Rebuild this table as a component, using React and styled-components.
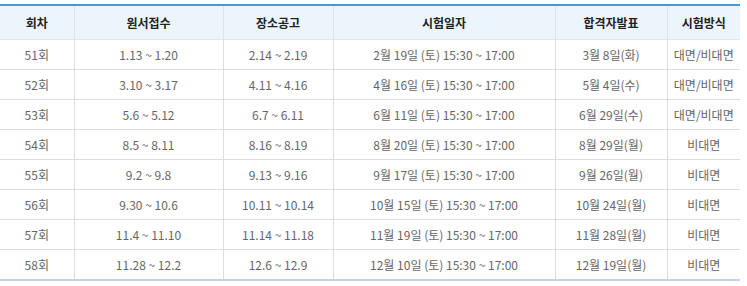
import React from "react";
import styled, { createGlobalStyle } from "styled-components";

const GlobalStyle = createGlobalStyle`
  body {
    margin: 0;
    background: #ffffff;
    font-family: "Noto Sans CJK KR", "Noto Sans", sans-serif;
  }
`;

const Wrapper = styled.div`
  padding-top: 4px;
  width: 740px;
`;

const Table = styled.table`
  width: 740px;
  border-collapse: collapse;
  table-layout: fixed;
  border-top: 2px solid #3d9be1;
  border-bottom: 2px solid #c5d3e4;
  font-size: 12px;
`;

const Th = styled.th`
  height: 33px;
  padding: 0;
  background: #edf5fc;
  color: #222;
  font-weight: 700;
  text-align: center;
  border-left: 1px solid #dde4eb;
  border-bottom: 1px solid #dde4eb;
  &:first-child {
    border-left: none;
  }
`;

const Td = styled.td`
  height: 29px;
  padding: 0;
  color: #666;
  text-align: center;
  border-left: 1px solid #dddddd;
  border-bottom: 1px solid #dddddd;
  &:first-child {
    border-left: none;
  }
  tr:last-child & {
    border-bottom: none;
  }
`;

const columns = [
  { title: "회차", width: 74 },
  { title: "원서접수", width: 149 },
  { title: "장소공고", width: 110 },
  { title: "시험일자", width: 222 },
  { title: "합격자발표", width: 112 },
  { title: "시험방식", width: 73 },
];

const rows = [
  ["51회", "1.13 ~ 1.20", "2.14 ~ 2.19", "2월 19일 (토) 15:30 ~ 17:00", "3월 8일(화)", "대면/비대면"],
  ["52회", "3.10 ~ 3.17", "4.11 ~ 4.16", "4월 16일 (토) 15:30 ~ 17:00", "5월 4일(수)", "대면/비대면"],
  ["53회", "5.6 ~ 5.12", "6.7 ~ 6.11", "6월 11일 (토) 15:30 ~ 17:00", "6월 29일(수)", "대면/비대면"],
  ["54회", "8.5 ~ 8.11", "8.16 ~ 8.19", "8월 20일 (토) 15:30 ~ 17:00", "8월 29일(월)", "비대면"],
  ["55회", "9.2 ~ 9.8", "9.13 ~ 9.16", "9월 17일 (토) 15:30 ~ 17:00", "9월 26일(월)", "비대면"],
  ["56회", "9.30 ~ 10.6", "10.11 ~ 10.14", "10월 15일 (토) 15:30 ~ 17:00", "10월 24일(월)", "비대면"],
  ["57회", "11.4 ~ 11.10", "11.14 ~ 11.18", "11월 19일 (토) 15:30 ~ 17:00", "11월 28일(월)", "비대면"],
  ["58회", "11.28 ~ 12.2", "12.6 ~ 12.9", "12월 10일 (토) 15:30 ~ 17:00", "12월 19일(월)", "비대면"],
];

const App = () => {
  return (
    <Wrapper>
      <GlobalStyle />
      <Table>
        <colgroup>
          {columns.map((c) => (
            <col key={c.title} style={{ width: c.width }} />
          ))}
        </colgroup>
        <thead>
          <tr>
            {columns.map((c) => (
              <Th key={c.title}>{c.title}</Th>
            ))}
          </tr>
        </thead>
        <tbody>
          {rows.map((r) => (
            <tr key={r[0]}>
              {r.map((cell, i) => (
                <Td key={i}>{cell}</Td>
              ))}
            </tr>
          ))}
        </tbody>
      </Table>
    </Wrapper>
  );
};

export default App;
